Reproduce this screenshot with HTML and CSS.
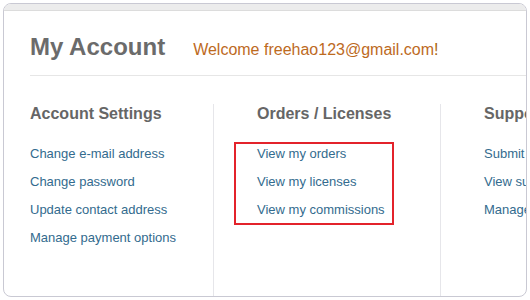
FILE: index.html
```html
<!DOCTYPE html>
<html lang="en">
<head>
  <meta charset="UTF-8">
  <title>My Account</title>
  <link rel="stylesheet" href="styles.css">
</head>
<body>

  <div class="card">
    <div class="card-band"></div>

    <div class="account-head">
      <h1>My Account</h1>
      <span class="welcome">Welcome freehao123@gmail.com<span class="bang">!</span></span>
    </div>

    <div class="columns">
      <div class="col">
        <h2>Account Settings</h2>
        <ul class="links">
          <li><a href="#">Change e-mail address</a></li>
          <li><a href="#">Change password</a></li>
          <li><a href="#">Update contact address</a></li>
          <li><a href="#">Manage payment options</a></li>
        </ul>
      </div>
      <div class="col">
        <h2>Orders / Licenses</h2>
        <ul class="links marked">
          <li><a href="#">View my orders</a></li>
          <li><a href="#">View my licenses</a></li>
          <li><a href="#">View my commissions</a></li>
        </ul>
      </div>
      <div class="col">
        <h2>Support</h2>
        <ul class="links">
          <li><a href="#">Submit a ticket</a></li>
          <li><a href="#">View support tickets</a></li>
          <li><a href="#">Manage subscriptions</a></li>
        </ul>
      </div>
    </div>
  </div>

</body>
</html>
```

FILE: styles.css
```css
body {
  margin: 3px;
  font-family: 'Liberation Sans', Arial, sans-serif;
  background: #ffffff;
}

.card {
  height: 292px;
  border: 1px solid #c9c9d3;
  border-radius: 8px;
  overflow: hidden;
  display: flex;
  flex-direction: column;
}

.card-band {
  height: 6px;
  background: #ececec;
  border-bottom: 1px solid #dcdcdc;
  flex: none;
}

.account-head {
  margin-left: 26px;
  padding: 22px 0 14px;
  border-bottom: 1px solid #e6e6e6;
  display: flex;
  align-items: baseline;
  gap: 28px;
}

.account-head h1 {
  margin: 0;
  font-size: 24px;
  line-height: 28px;
  color: #6b6b6b;
}

.welcome {
  font-size: 16px;
  color: #bd6a1e;
}

.bang {
  color: #a8640a;
}

.columns {
  flex: 1;
  display: flex;
  margin: 28px 0 0 26px;
}

.col {
  flex: none;
  width: 183px;
}

.col + .col {
  border-left: 1px solid #e6e6ea;
  padding-left: 43px;
}

.col h2 {
  margin: 0 0 16px;
  font-size: 16px;
  line-height: 20px;
  color: #666666;
}

.links {
  list-style: none;
  margin: 0;
  padding: 0;
  font-size: 13px;
  line-height: 28px;
  white-space: nowrap;
}

.links a {
  color: #336b8e;
  text-decoration: none;
}

/* red annotation box round the orders list */
.marked {
  position: relative;
  width: fit-content;
}

.marked::after {
  content: "";
  position: absolute;
  left: -23px;
  right: -9px;
  top: 2px;
  bottom: -1px;
  border: 2px solid #e3232b;
}
```
